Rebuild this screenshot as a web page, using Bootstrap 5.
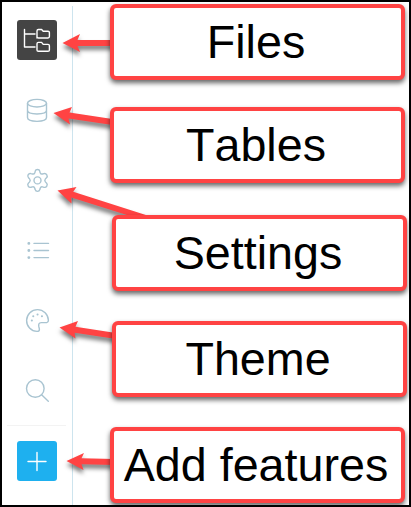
<!DOCTYPE html>
<html lang="en">
<head>
<meta charset="utf-8">
<meta name="viewport" content="width=device-width, initial-scale=1">
<title>Sidebar guide</title>
<link href="https://cdn.jsdelivr.net/npm/bootstrap@5.3.0/dist/css/bootstrap.min.css" rel="stylesheet">
<style>
body { font-family: "Liberation Sans", Arial, sans-serif; }
.guide { width: 411px; height: 507px; border: 2px solid #000; }
.rail { width: 71px; padding: 4px 0 1px; }
.rail-inner { border-right: 1px solid #cde4ee; padding-top: 14px; }
.tool { width: 40px; height: 40px; padding: 0; border: 0; border-radius: 3px; margin-left: 15px; display: block; color: #a9c4d1; background: none; margin-bottom: 30px; }
.tool svg { display: block; fill: none; stroke: currentColor; stroke-width: 1.4; stroke-linecap: round; stroke-linejoin: round; }
.tool-dark { background: #444; color: #fff; }
.tool-add { background: #1eb0ef; color: #fff; margin-top: 15px; }
.tool-last { margin-bottom: 15px; }
.rule { height: 1px; background: #f3f3f3; margin: 0 6px 0 5px; }
.labels { padding: 2px 0 0 37px; }
.callout { width: 295px; height: 76px; padding-right: 3px; border: 4px solid #ff4343; border-radius: 6px; background: #fff; box-shadow: 0 3px 5px rgba(0,0,0,.6); font-size: 46.67px; font-kerning: none; line-height: 1; color: #000; white-space: nowrap; margin-bottom: 27px; z-index: 2; flex: none; }
.shifted { margin-left: 2px; }
.mb-a { margin-bottom: 32px; }
.mb-b { margin-bottom: 30px; }
.arrows { left: -2px; top: -2px; z-index: 1; filter: drop-shadow(0 4px 2px rgba(0,0,0,.5)); pointer-events: none; }
</style>
<script src="https://cdn.jsdelivr.net/npm/bootstrap@5.3.0/dist/js/bootstrap.bundle.min.js"></script>
</head>
<body class="m-0 bg-white overflow-hidden">
<main class="guide d-flex position-relative overflow-hidden bg-white">
  <nav class="rail flex-shrink-0 d-flex flex-column" aria-label="Tools">
    <div class="rail-inner flex-grow-1">
      <button class="tool tool-dark" aria-label="Files"><svg width="40" height="40"><path d="M7.5 9.5V27H18M7.5 14H18M20 18V10.9Q20 9.5 21.4 9.5H24.6L26.2 11.2H31Q32.4 11.2 32.4 12.6V16.6Q32.4 18 31 18H21.4Q20 18 20 16.6M20 30.2V23.8Q20 22.4 21.4 22.4H24.6L26.2 24.4H31Q32.4 24.4 32.4 25.8V29.9Q32.4 31.3 31 31.3H21.4Q20 31.3 20 29.9"/></svg></button>
      <button class="tool" aria-label="Tables"><svg width="40" height="40"><ellipse cx="20" cy="13.2" rx="9.5" ry="3.8"/><path d="M10.5 13.2V27.6C10.5 32.6 29.5 32.6 29.5 27.6V13.2M10.5 20.3C10.5 25.2 29.5 25.2 29.5 20.3"/></svg></button>
      <button class="tool" aria-label="Settings"><svg width="40" height="40"><circle cx="20.5" cy="20.4" r="3.5"/><path d="M18.2 11.2Q18.6 9.5 20.5 9.5T22.8 11.2L23.2 12.7Q23.8 14.4 25.5 14L27 13.6Q28.8 13.2 29.8 14.9T29.5 17.7L28.4 18.9Q27.2 20.4 28.4 21.9L29.5 23.1Q30.8 24.4 29.8 26.1T27 27.3L25.5 26.9Q23.8 26.5 23.2 28.2L22.8 29.7Q22.4 31.4 20.5 31.4T18.2 29.7L17.8 28.2Q17.2 26.5 15.5 26.9L14 27.3Q12.2 27.8 11.2 26.1T11.5 23.1L12.6 21.9Q13.8 20.4 12.6 18.9L11.5 17.7Q10.2 16.4 11.2 14.7T14 13.6L15.5 14Q17.2 14.4 17.8 12.7Z"/></svg></button>
      <button class="tool" aria-label="List"><svg width="40" height="40"><path d="M17 13.4H31.5M17 20.5H31.5M17 27.6H31.5"/><path stroke-width="2.8" d="M11.8 13.4H11.9M11.8 20.5H11.9M11.8 27.6H11.9"/></svg></button>
      <button class="tool" aria-label="Theme"><svg width="40" height="40"><path d="M31.4 20.3A10.9 10.9 0 1 0 20 31.4Q22.4 31.4 22.4 29.5Q22.4 28.5 21.9 27Q20.9 22.8 24.2 22.6L29.8 22.6Q31.5 22.3 31.4 20.3Z"/><path stroke-width="2" d="M14.8 20.4H14.9M16.2 16.2H16.3M20.5 14.5H20.6M24.9 16.2H25"/></svg></button>
      <button class="tool tool-last" aria-label="Search"><svg width="40" height="40"><circle cx="18.3" cy="18.5" r="8.8"/><path d="M24.6 24.8L31.3 31.2"/></svg></button>
      <div class="rule"></div>
      <button class="tool tool-add" aria-label="Add features"><svg width="40" height="40"><path stroke-width="1.4" d="M20 11.5V29.5M11 20.5H29"/></svg></button>
    </div>
  </nav>
  <section class="labels d-flex flex-column">
    <div class="callout position-relative d-flex align-items-center justify-content-center">Files</div>
    <div class="callout mb-a position-relative d-flex align-items-center justify-content-center">Tables</div>
    <div class="callout shifted mb-b position-relative d-flex align-items-center justify-content-center">Settings</div>
    <div class="callout shifted mb-b position-relative d-flex align-items-center justify-content-center">Theme</div>
    <div class="callout position-relative d-flex align-items-center justify-content-center">Add features</div>
  </section>
  <svg class="arrows position-absolute" width="411" height="507" fill="#ff4343" aria-hidden="true">
    <path d="M62.5 43L80 34L77.5 40H114V46H77.5L80 52Z"/>
    <path d="M53.5 113L72 107L69.5 112.4L114 119.2V125.2L68.5 118.4L70 124.5Z"/>
    <path d="M57.5 190.5L76.5 187L73.2 191.7L149 216H130L71.3 197.5L71.5 203.5Z"/>
    <path d="M59.5 327.5L78 321L75.5 326.8L116 333V339L74.6 332.7L75.5 338.5Z"/>
    <path d="M66.5 461L84 453L81.5 458.2L114 459V465L81.5 464.2L83.5 470Z"/>
  </svg>
</main>
</body>
</html>
